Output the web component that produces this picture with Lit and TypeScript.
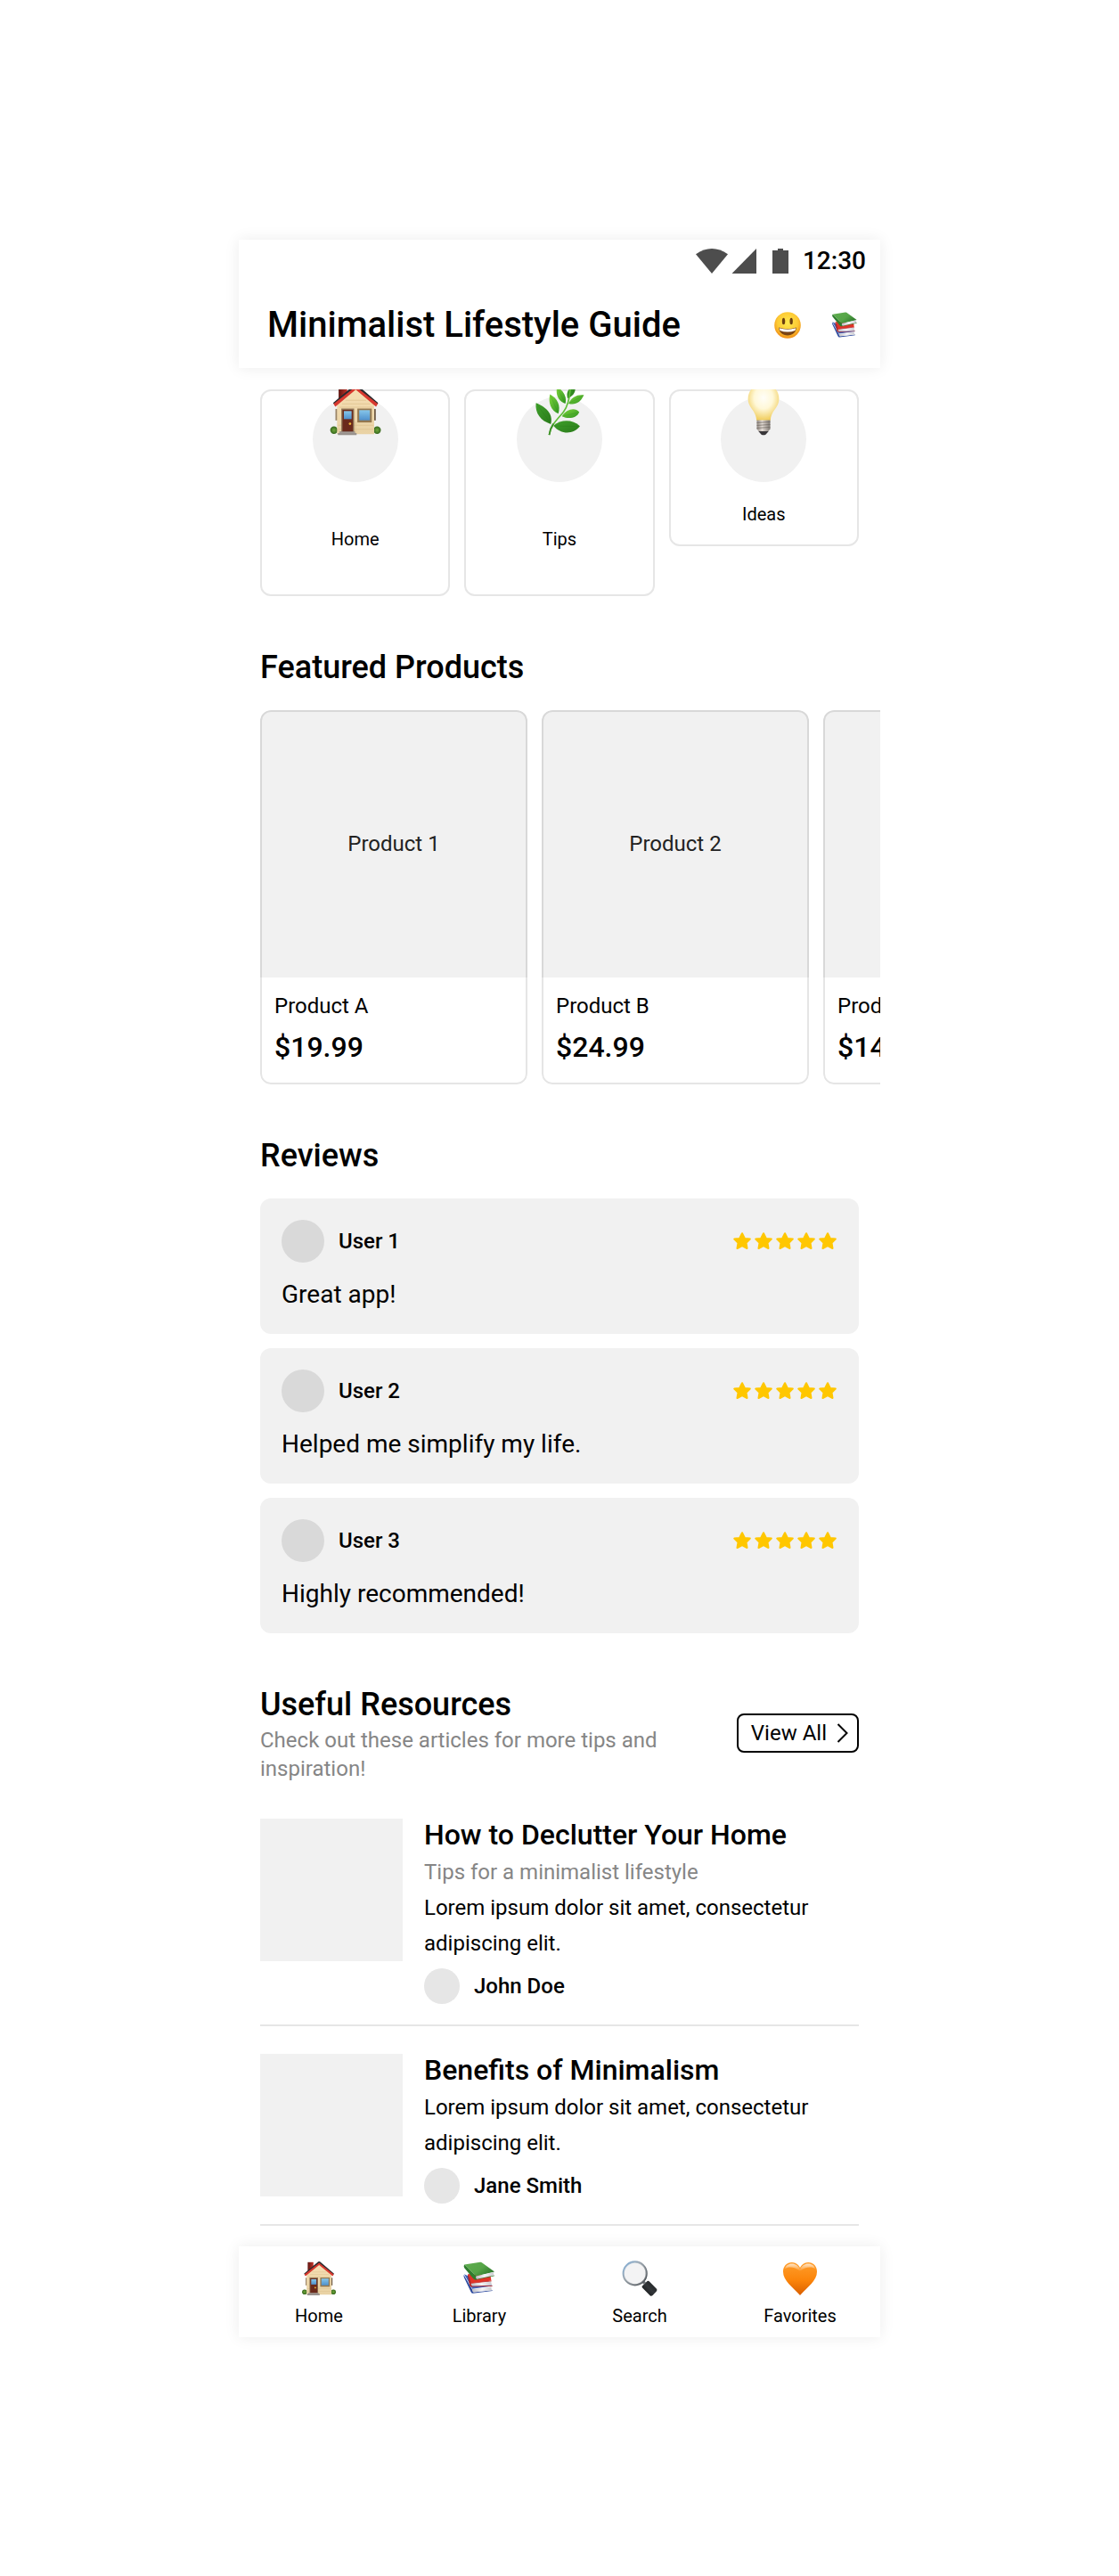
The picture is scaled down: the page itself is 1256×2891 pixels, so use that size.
import { LitElement, html, svg, css } from "lit";
import { customElement, property } from "lit/decorators.js";

type IconName = "house" | "leaf" | "bulb" | "books" | "search" | "heart" | "smiley";

const ICONS: Record<IconName, unknown> = {
  house: svg`
    <defs>
      <linearGradient id="wall" x1="0" y1="0" x2="0" y2="1"><stop offset="0" stop-color="#f6dfb4"/><stop offset="1" stop-color="#e9d2a4"/></linearGradient>
      <linearGradient id="chim" x1="0" y1="0" x2="1" y2="0"><stop offset="0" stop-color="#5e1510"/><stop offset="1" stop-color="#c4352b"/></linearGradient>
      <linearGradient id="pane" x1="0" y1="0" x2="0" y2="1"><stop offset="0" stop-color="#86c6ea"/><stop offset="1" stop-color="#4f90cc"/></linearGradient>
      <radialGradient id="bush"><stop offset="0" stop-color="#6fa83c"/><stop offset="1" stop-color="#35661b"/></radialGradient>
    </defs>
    <rect x="5" y="19.3" width="1.6" height="8.6" fill="#9a8468"/>
    <rect x="33.7" y="19.3" width="1.5" height="8.6" fill="#6f5a45"/>
    <circle cx="3.9" cy="35.2" r="2.8" fill="url(#bush)"/>
    <circle cx="36.2" cy="35.2" r="2.8" fill="url(#bush)"/>
    <rect x="7.4" y="1.8" width="6.4" height="11" fill="url(#chim)"/>
    <path d="M6.2 16 20.3 3 34 16V38.2H6.2Z" fill="url(#wall)"/>
    <path d="M10 15.5H31M8 18H33M7 31.5H33.5M7 34.5H33.5M20 28.8V37.5M12.5 12.8H28" stroke="#dcc08e" stroke-width=".5"/>
    <path d="M3.2 14.8 19.2 1.2Q20.2.6 21.2 1.2L37 14.8 35.6 16.4 20.2 4 4.7 16.4Z" fill="#2a2a2e"/>
    <path d="M3.6 15.5 20.2 2.6 36.7 15.5 35.4 17.6 20.2 4.9 4.9 17.6Z" fill="#d8392f"/>
    <rect x="9.4" y="19" width="9.6" height="18" fill="#8d7254"/>
    <rect x="10.3" y="20" width="7.8" height="16.6" fill="#6b2a1b"/>
    <rect x="11.3" y="20.9" width="5.8" height="6" fill="url(#pane)"/>
    <circle cx="15.9" cy="30.4" r=".9" fill="#efb73c"/>
    <rect x="21.4" y="19" width="10.8" height="10.4" fill="#94784f"/>
    <rect x="22.8" y="20.2" width="8" height="7.6" fill="url(#pane)"/>
    <path d="M8 36.2H19.6V37.3H20.8V38.9H6.9V37.3H8Z" fill="#8e8782"/>
    <path d="M8 36.9H19.6M7 38H20.8" stroke="#b7afa8" stroke-width=".4"/>`,
  leaf: svg`
    <defs>
      <linearGradient id="lf" x1="0" y1="0" x2="1" y2="1"><stop offset="0" stop-color="#3fa02a"/><stop offset="1" stop-color="#2a7a1b"/></linearGradient>
      <linearGradient id="lg" x1="0" y1="0" x2="1" y2="1"><stop offset="0" stop-color="#7ed63c"/><stop offset="1" stop-color="#2f9321"/></linearGradient>
    </defs>
    <path d="M2.4 14.9C9.5 17.5 15.5 23 13.5 30.6 6 28.5 1.5 22.5 2.4 14.9Z" fill="url(#lf)"/>
    <path d="M12.9 8.3C18.5 11.5 21 16.5 19.1 22.9 13.5 20.5 11.3 14.5 12.9 8.3Z" fill="url(#lg)"/>
    <path d="M18.2 2.5C23.5 6.5 25.5 10 24.4 15.4 18.8 13.5 17 8.5 18.2 2.5Z" fill="url(#lg)"/>
    <path d="M31.5 2C32.5 6.5 30.5 9.5 26.1 11.4 24.6 6.5 27 3.5 31.5 2Z" fill="url(#lf)"/>
    <path d="M38.3 8.9C35.8 14.5 31.5 16.8 26.7 15.3 29 10.5 33 8.3 38.3 8.9Z" fill="url(#lg)"/>
    <path d="M34.8 21.6C33 26 27 27.3 21.8 24.8 25 19.5 31.5 17.8 34.8 21.6Z" fill="url(#lg)"/>
    <path d="M35.3 32.2C30 38.8 21 38.5 15.4 31.8 21.5 27 29.5 27 35.3 32.2Z" fill="url(#lf)"/>
    <path d="M12.3 38.7C13.4 31 19.5 26 23 21.5 26 17.5 28 10.5 28.2 1" fill="none" stroke="#5fbd38" stroke-width="1.1"/>
    <path d="M12.3 38.7C12.6 35.5 13.8 32.8 15.4 30.4" fill="none" stroke="#3c8f27" stroke-width="1.2"/>
    <path d="M2.8 15.4 13 29.6M13.2 9 18.8 22M18.6 4 24 14.6M37.6 9.3 27.2 15M34 22 22.6 24.6M34.4 32.4 16.4 32" stroke="#1f6f16" stroke-opacity=".4" stroke-width=".3"/>`,
  bulb: svg`
    <defs>
      <radialGradient id="glass" cx=".5" cy=".38" r=".6"><stop offset="0" stop-color="#fffef8"/><stop offset=".5" stop-color="#fff8d8"/><stop offset="1" stop-color="#f1cf62"/></radialGradient>
      <linearGradient id="metal"><stop offset="0" stop-color="#8f8781"/><stop offset=".4" stop-color="#e4dcd5"/><stop offset="1" stop-color="#7e7771"/></linearGradient>
    </defs>
    <path d="M20 .5C13 .5 8.4 5.5 8.4 11.8 8.4 18.5 14.6 20.5 14.8 28H25.2C25.4 20.5 31.6 18.5 31.6 11.8 31.6 5.5 27 .5 20 .5Z" fill="url(#glass)"/>
    <path d="M15 27.6H25V34.2L23.6 36H16.4L15 34.2Z" fill="url(#metal)"/>
    <path d="M15 29.6 25 29M15 31.6 25 31M15 33.6 25 33" stroke="#6f6862" stroke-width=".5"/>
    <path d="M16.2 36H23.8L21.6 38.5Q20 39.2 18.4 38.5Z" fill="#39373a"/>`,
  books: svg`
    <defs>
      <linearGradient id="green" x1="0" y1="0" x2="1" y2=".6"><stop offset="0" stop-color="#5fae4f"/><stop offset=".6" stop-color="#56a548"/><stop offset="1" stop-color="#2e7a2c"/></linearGradient>
      <linearGradient id="page" x1="0" y1="0" x2="1" y2="0"><stop offset="0" stop-color="#bdbdc4"/><stop offset=".5" stop-color="#f4f4f6"/><stop offset="1" stop-color="#c9c9cf"/></linearGradient>
    </defs>
    <path d="M3 15.2 12.2 31.8 34.4 28.6 30 22 9 18Z" fill="#3e63bd"/>
    <path d="M2.6 16Q2.2 17.6 3 19.2L10.6 35.2Q11.4 37 13 36.8L34.6 34 34.8 33.2 13.4 35.4 11.9 32.2Z" fill="#2c4a9f"/>
    <path d="M11.9 32.2 33.6 29.4Q33 31.6 34.4 33.2L13.4 35.6Q11.6 34.4 11.9 32.2Z" fill="url(#page)"/>
    <path d="M7.4 15 10.6 25.4 33.4 22.6 32.6 17Z" fill="#e03327"/>
    <path d="M7.4 15Q6.6 16.6 7.2 18.6L9.2 27.4Q9.8 29.6 11.8 29.6L34.6 28.8V28L12 28.4 10.6 25.2Z" fill="#b81d18"/>
    <path d="M10.6 25.2 33.4 22.9Q32.8 25.4 34.4 27.8L12 28.6Q10.2 27.4 10.6 25.2Z" fill="url(#page)"/>
    <path d="M10.2 25 33.6 22.4V23.2L10.6 25.8Z" fill="#d7291f"/>
    <path d="M3.2 4.6 21 1.8Q22 1.6 22.8 2.2L37 12.6 16.4 17.6Z" fill="url(#green)"/>
    <path d="M3.2 4.6Q2 6.4 3.2 8.2L13.2 20.2Q14.6 22 16.8 21.6L37 17.2 36.8 16.4 17 20.6 16.4 17.4Z" fill="#2f7d2e"/>
    <path d="M16.4 17.6 36.4 13Q35.2 14.8 36.6 16.4L17.2 20.8Q15.2 19.6 16.4 17.6Z" fill="url(#page)"/>`,
  search: svg`
    <defs>
      <linearGradient id="ring" x1="0" y1="0" x2="1" y2="1"><stop offset="0" stop-color="#7fb0dc"/><stop offset=".4" stop-color="#98a2ab"/><stop offset="1" stop-color="#3f4347"/></linearGradient>
      <linearGradient id="grip" x1="0" y1="1" x2="1" y2="0"><stop offset="0" stop-color="#0c0d0e"/><stop offset=".5" stop-color="#33373a"/><stop offset="1" stop-color="#16181a"/></linearGradient>
    </defs>
    <path d="M22.6 24.8 25 22.4 27 24.4 24.6 26.8Z" fill="#6c7176"/>
    <path d="M22.9 28.6 28.6 23.1Q29.6 22.4 30.6 23.3L39 31.8Q40 33.4 38.4 35L34.6 39Q33 40.4 31.6 39.2L23 30.5Q22.2 29.5 22.9 28.6Z" fill="url(#grip)"/>
    <circle cx="14.7" cy="14.4" r="13" fill="#f3f3f4"/>
    <circle cx="14.7" cy="14.4" r="13" fill="none" stroke="url(#ring)" stroke-width="2.2"/>
    <circle cx="14.7" cy="14.4" r="12.4" fill="none" stroke="#fff" stroke-opacity=".5" stroke-width=".5"/>`,
  heart: svg`
    <defs>
      <linearGradient id="hrt" x1="0" y1="0" x2="0" y2="1"><stop offset="0" stop-color="#ff9d2b"/><stop offset=".55" stop-color="#fb840a"/><stop offset="1" stop-color="#d95f00"/></linearGradient>
      <linearGradient id="shine" x1="0" y1="0" x2="0" y2="1"><stop offset="0" stop-color="#fff" stop-opacity=".75"/><stop offset="1" stop-color="#fff" stop-opacity="0"/></linearGradient>
    </defs>
    <path d="M20 8C18.2 4.2 14.6 2 10.8 2 5.2 2 1 6.4 1 12.4 1 22.6 11.4 29 20 39 28.6 29 39 22.6 39 12.4 39 6.4 34.8 2 29.2 2 25.4 2 21.8 4.2 20 8Z" fill="url(#hrt)"/>
    <path d="M20 9.5C18 5.4 14.4 3.4 11 3.4 7 3.4 4 5.6 3 9 7 6.4 14 6.6 20 12 26 6.6 33 6.4 37 9 36 5.6 33 3.4 29 3.4 25.6 3.4 22 5.4 20 9.5Z" fill="url(#shine)"/>`,
  smiley: svg`
    <defs>
      <radialGradient id="face" cx=".5" cy=".4" r=".6"><stop offset="0" stop-color="#ffe94f"/><stop offset=".65" stop-color="#fdca34"/><stop offset="1" stop-color="#f08c16"/></radialGradient>
    </defs>
    <circle cx="20" cy="20" r="18.5" fill="url(#face)"/>
    <ellipse cx="14.4" cy="14.4" rx="2.1" ry="4.8" fill="#6c3f10"/>
    <ellipse cx="25.2" cy="14.4" rx="2.1" ry="4.8" fill="#6c3f10"/>
    <path d="M7.6 23.2Q20 27.2 32.4 23.2C32 30 27 34.4 20 34.4S8 30 7.6 23.2Z" fill="#7a4415"/>
    <path d="M8.3 24Q20 27.6 31.7 24L30.6 27.6Q20 31.4 9.4 27.6Z" fill="#fff"/>`,
};

@customElement("emoji-icon")
class EmojiIcon extends LitElement {
  @property() name: IconName = "house";

  static styles = css`
    :host { display: block; }
    .art { display: block; width: 100%; height: 100%; }
  `;

  render() {
    return html`<svg class="art" viewBox="0 0 40 40" aria-hidden="true">${ICONS[this.name]}</svg>`;
  }
}

interface Category { label: string; icon: IconName; tall: boolean; }
interface Product { image: string; name: string; price: string; }
interface Review { user: string; text: string; stars: number; }
interface Article { title: string; subtitle?: string; body: string; author: string; }

const CATEGORIES: Category[] = [
  { label: "Home", icon: "house", tall: true },
  { label: "Tips", icon: "leaf", tall: true },
  { label: "Ideas", icon: "bulb", tall: false },
];

const PRODUCTS: Product[] = [
  { image: "Product 1", name: "Product A", price: "$19.99" },
  { image: "Product 2", name: "Product B", price: "$24.99" },
  { image: "", name: "Product C", price: "$14.99" },
];

const REVIEWS: Review[] = [
  { user: "User 1", text: "Great app!", stars: 5 },
  { user: "User 2", text: "Helped me simplify my life.", stars: 5 },
  { user: "User 3", text: "Highly recommended!", stars: 5 },
];

const ARTICLES: Article[] = [
  {
    title: "How to Declutter Your Home",
    subtitle: "Tips for a minimalist lifestyle",
    body: "Lorem ipsum dolor sit amet, consectetur adipiscing elit.",
    author: "John Doe",
  },
  {
    title: "Benefits of Minimalism",
    body: "Lorem ipsum dolor sit amet, consectetur adipiscing elit.",
    author: "Jane Smith",
  },
];

const TABS: { label: string; icon: IconName }[] = [
  { label: "Home", icon: "house" },
  { label: "Library", icon: "books" },
  { label: "Search", icon: "search" },
  { label: "Favorites", icon: "heart" },
];

@customElement("app-root")
class AppRoot extends LitElement {
  static styles = css`
    :host {
      display: block;
      padding: 269px 0 268px;
      background: #fff;
      color: #000;
      font-family: Roboto, "Liberation Sans", sans-serif;
      font-size: 24px;
      line-height: 32px;
    }
    * { box-sizing: border-box; }
    h1, h2, h3, p, ul { margin: 0; padding: 0; }
    h1, h2, h3 { font-weight: 500; }
    ul { list-style: none; }
    button { font: inherit; color: inherit; background: none; border: 0; padding: 0; cursor: pointer; }
    a { color: inherit; text-decoration: none; }

    .screen { max-width: 720px; margin: 0 auto; }
    .raised { background: #fff; box-shadow: 0 0 16px rgba(0, 0, 0, 0.08); }

    .status {
      display: flex;
      justify-content: flex-end;
      align-items: center;
      gap: 16px;
      height: 48px;
      padding-right: 16px;
      font-size: 28px;
      font-weight: 500;
    }
    .signals { width: 104px; height: 28px; fill: #4d4d4d; }
    .appbar {
      display: flex;
      align-items: center;
      justify-content: space-between;
      height: 96px;
      padding: 0 24px 0 32px;
    }
    .title { font-size: 40px; line-height: 48px; }
    .actions { display: flex; gap: 32px; }
    .action-icon { width: 32px; height: 32px; }

    .content {
      display: flex;
      flex-direction: column;
      gap: 56px;
      padding: 24px 24px 23px;
    }

    .categories { display: flex; gap: 16px; align-items: flex-start; }
    .category {
      flex: 1;
      display: flex;
      flex-direction: column;
      align-items: center;
      gap: 8px;
      padding: 6px;
      border: 2px solid #e6e6e6;
      border-radius: 12px;
      overflow: clip;
      overflow-clip-margin: border-box;
      font-size: 20px;
    }
    .disc { position: relative; width: 96px; height: 96px; border-radius: 50%; background: #f1f1f1; }
    .disc-icon { position: absolute; left: 18px; top: -15px; width: 60px; height: 60px; }
    .category-label { line-height: 32px; padding: 12px 0; }
    .category-label.tall { padding: 40px 0; }

    .section { display: flex; flex-direction: column; gap: 24px; }
    .heading { font-size: 36px; line-height: 48px; }

    .products {
      display: flex;
      gap: 16px;
      margin-right: -24px;
      overflow-x: auto;
      scrollbar-width: none;
    }
    .product { position: relative; flex: 0 0 300px; border-radius: 12px; overflow: hidden; }
    .product::after {
      content: "";
      position: absolute;
      inset: 0;
      border: 2px solid rgba(0, 0, 0, 0.1);
      border-radius: 12px;
      pointer-events: none;
    }
    .product-image {
      display: flex;
      align-items: center;
      justify-content: center;
      aspect-ratio: 1;
      background: #f1f1f1;
      color: #222;
    }
    .product-info { display: flex; flex-direction: column; gap: 8px; padding: 16px 16px 20px; }
    .price { font-size: 32px; line-height: 44px; font-weight: 500; }

    .reviews { display: flex; flex-direction: column; gap: 16px; }
    .review {
      display: flex;
      flex-direction: column;
      gap: 16px;
      padding: 24px;
      border-radius: 12px;
      background: #f1f1f1;
    }
    .review-head, .author { display: flex; align-items: center; gap: 16px; font-weight: 500; }
    .avatar { width: 48px; height: 48px; border-radius: 50%; background: #d9d9d9; }
    .stars { display: flex; margin-left: auto; }
    .star { width: 24px; height: 24px; fill: #ffc700; stroke: #ffc700; stroke-width: 2; stroke-linejoin: round; }
    .review-text { font-size: 28px; line-height: 40px; }

    .resources { display: flex; flex-direction: column; gap: 40px; }
    .resources-head { display: flex; align-items: center; justify-content: space-between; gap: 24px; }
    .intro { flex: 0 1 480px; }
    .muted { color: #868686; }
    .view-all {
      display: flex;
      align-items: center;
      gap: 10px;
      height: 44px;
      padding: 0 8px 0 14px;
      border: 2px solid #000;
      border-radius: 8px;
      white-space: nowrap;
    }
    .chevron { width: 16px; height: 24px; fill: none; stroke: #000; stroke-width: 2; }

    .articles { display: flex; flex-direction: column; gap: 31px; }
    .article { display: flex; gap: 24px; padding-bottom: 23px; border-bottom: 2px solid #e6e6e6; }
    .thumb { flex: 0 0 160px; height: 160px; background: #f1f1f1; }
    .article-text { flex: 1; line-height: 40px; }
    .article-title { font-size: 32px; line-height: 36px; padding-bottom: 4px; }
    .author { margin-top: 8px; }
    .author-avatar { width: 40px; height: 40px; border-radius: 50%; background: #e6e6e6; }

    .tabs { display: flex; padding: 16px 0 10px; font-size: 20px; line-height: 28px; }
    .tab { flex: 1; }
    .tab-link { display: flex; flex-direction: column; align-items: center; gap: 8px; }
    .tab-icon { width: 40px; height: 40px; }
  `;

  private renderStars(count: number) {
    return html`<div class="stars" role="img" aria-label="${count} stars">
      ${Array.from({ length: count }, () => html`<svg class="star" viewBox="-1 0 24 24">
        <path d="M12 3.2 14.9 8.9 20.8 9.6 16.5 13.9 17.5 20 12 17.2 6.5 20 7.5 13.9 3.2 9.6 9.1 8.9Z"/>
      </svg>`)}
    </div>`;
  }

  render() {
    return html`
      <div class="screen">
        <header class="raised">
          <div class="status">
            <svg class="signals" viewBox="0 0 104 28" aria-hidden="true">
              <path d="M0 6.2Q18-6.2 36 6.2L18 28Z"/>
              <path d="M68 0V28H40.5Z"/>
              <path d="M86 2H92V0H98V2H104V28H86Z"/>
            </svg>
            <span>12:30</span>
          </div>
          <div class="appbar">
            <h1 class="title">Minimalist Lifestyle Guide</h1>
            <div class="actions">
              <button aria-label="Profile"><emoji-icon class="action-icon" name="smiley"></emoji-icon></button>
              <button aria-label="Library"><emoji-icon class="action-icon" name="books"></emoji-icon></button>
            </div>
          </div>
        </header>

        <main class="content">
          <div class="categories">
            ${CATEGORIES.map((c) => html`
              <button class="category">
                <span class="disc"><emoji-icon class="disc-icon" name=${c.icon}></emoji-icon></span>
                <span class="category-label ${c.tall ? "tall" : ""}">${c.label}</span>
              </button>`)}
          </div>

          <section class="section">
            <h2 class="heading">Featured Products</h2>
            <div class="products">
              ${PRODUCTS.map((p) => html`
                <article class="product">
                  <div class="product-image">${p.image}</div>
                  <div class="product-info">
                    <p>${p.name}</p>
                    <p class="price">${p.price}</p>
                  </div>
                </article>`)}
            </div>
          </section>

          <section class="section">
            <h2 class="heading">Reviews</h2>
            <div class="reviews">
              ${REVIEWS.map((r) => html`
                <article class="review">
                  <div class="review-head">
                    <span class="avatar"></span>
                    <span>${r.user}</span>
                    ${this.renderStars(r.stars)}
                  </div>
                  <p class="review-text">${r.text}</p>
                </article>`)}
            </div>
          </section>

          <section class="resources">
            <div class="resources-head">
              <div class="intro">
                <h2 class="heading">Useful Resources</h2>
                <p class="muted">Check out these articles for more tips and inspiration!</p>
              </div>
              <button class="view-all">
                View All
                <svg class="chevron" viewBox="0 0 16 24" aria-hidden="true"><path d="M2.5 2 12.5 12 2.5 22"/></svg>
              </button>
            </div>
            <div class="articles">
              ${ARTICLES.map((a) => html`
                <article class="article">
                  <div class="thumb"></div>
                  <div class="article-text">
                    <h3 class="article-title">${a.title}</h3>
                    ${a.subtitle ? html`<p class="muted">${a.subtitle}</p>` : ""}
                    <p>${a.body}</p>
                    <div class="author"><span class="author-avatar"></span><span>${a.author}</span></div>
                  </div>
                </article>`)}
            </div>
          </section>
        </main>

        <nav class="raised">
          <ul class="tabs">
            ${TABS.map((t) => html`
              <li class="tab">
                <a class="tab-link" href="#"><emoji-icon class="tab-icon" name=${t.icon}></emoji-icon>${t.label}</a>
              </li>`)}
          </ul>
        </nav>
      </div>
    `;
  }
}
